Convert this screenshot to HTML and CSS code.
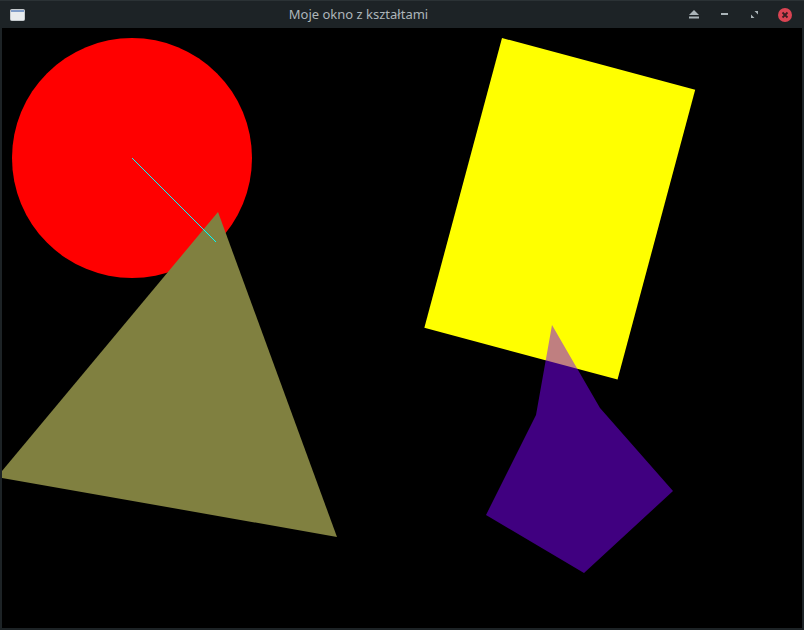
FILE: index.html
```html
<!DOCTYPE html>
<html lang="pl">
<head>
<meta charset="utf-8">
<title>Moje okno z kształtami</title>
<link rel="stylesheet" href="styles.css">
</head>
<body>
<div class="window">
  <header class="titlebar">
    <div class="app-icon">
      <svg width="15" height="12" viewBox="0 0 15 12">
        <rect x="0.5" y="0.5" width="14" height="11" rx="1" fill="#e8ecee" stroke="#c5cacd"/>
        <rect x="1" y="1" width="13" height="2" fill="#7f9cc7"/>
      </svg>
    </div>
    <div class="title">Moje okno z kształtami</div>
    <div class="controls">
      <button class="ctl">
        <svg width="10" height="9" viewBox="0 0 10 9"><path d="M5 0 L10 5 L0 5 Z" fill="#aab4b8"/><rect x="0" y="6.5" width="10" height="2" fill="#aab4b8"/></svg>
      </button>
      <button class="ctl">
        <svg width="7" height="3" viewBox="0 0 7 3"><rect x="0" y="0" width="7" height="2" fill="#aab4b8"/></svg>
      </button>
      <button class="ctl">
        <svg width="7" height="7" viewBox="0 0 7 7"><path d="M3.5 0 H7 V3.5 Z M0 3.5 V7 H3.5 Z" fill="#aab4b8"/></svg>
      </button>
      <button class="ctl close">
        <svg width="16" height="16" viewBox="0 0 16 16"><circle cx="8" cy="8" r="7" fill="#da4453"/><path d="M5.5 5.5 L10.5 10.5 M10.5 5.5 L5.5 10.5" stroke="#3a1e22" stroke-width="1.8"/></svg>
      </button>
    </div>
  </header>
  <main class="canvas">
    <svg width="800" height="600" viewBox="0 0 800 600">
      <rect width="800" height="600" fill="#000"/>
      <circle cx="130" cy="130" r="120" fill="#ff0000"/>
      <polygon points="216,184 335,509 -5,449" fill="#808040"/>
      <line x1="130" y1="130" x2="214" y2="214" stroke="#00ffff" stroke-width="1"/>
      <g transform="translate(500,10) rotate(15)">
        <rect width="200" height="300" fill="#ffff00"/>
      </g>
      <polygon points="550,297 598,380 671,463 582,545 484,487 534,387" fill="rgba(128,0,255,0.5)"/>
    </svg>
  </main>
</div>
</body>
</html>
```
FILE: styles.css
```css
html, body {
  margin: 0;
  padding: 0;
  background: #1d2326;
}
.window {
  width: 804px;
  height: 630px;
  display: flex;
  flex-direction: column;
  background: #1d2326;
  border-top: 1px solid #2b3235;
  box-sizing: border-box;
}
.titlebar {
  height: 27px;
  display: flex;
  align-items: center;
}
.app-icon {
  width: 15px;
  height: 12px;
  margin-left: 10px;
  display: flex;
}
.title {
  flex: 1;
  text-align: center;
  font-family: "Noto Sans", "Open Sans", sans-serif;
  font-size: 13px;
  color: #adb6ba;
  margin-left: 16px;
  margin-top: -1px;
}
.controls {
  display: flex;
  align-items: center;
  margin-right: 10px;
}
.ctl {
  border: 0;
  padding: 0;
  background: transparent;
  width: 24px;
  height: 20px;
  display: flex;
  align-items: center;
  justify-content: center;
  margin-left: 6px;
}
.ctl.close {
  width: 18px;
  margin-left: 10px;
}
.canvas {
  margin: 0 2px 2px 2px;
  width: 800px;
  height: 600px;
  display: flex;
}
.canvas svg {
  display: block;
}
```
